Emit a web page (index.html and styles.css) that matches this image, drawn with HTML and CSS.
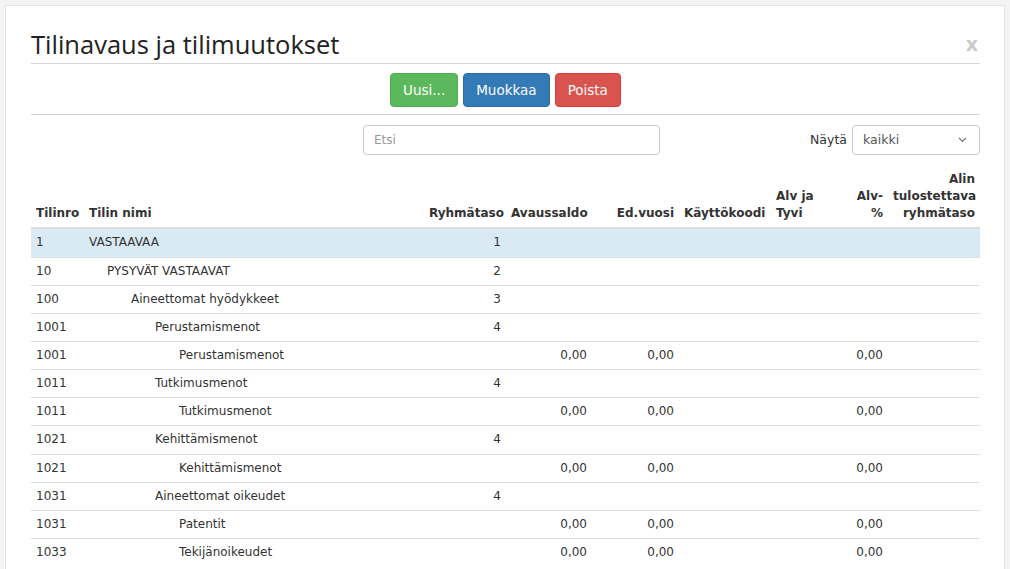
FILE: index.html
```html
<!DOCTYPE html>
<html lang="fi">
<head>
    <meta charset="UTF-8">
    <meta name="viewport" content="width=device-width, initial-scale=1.0">
    <title>Tilinavaus ja tilimuutokset</title>
    <link rel="stylesheet" href="styles.css">
</head>
<body>
    <div class="modal">
        <div class="modal-header">
            <h1>Tilinavaus ja tilimuutokset</h1>
            <span class="close">x</span>
        </div>

        <div class="toolbar">
            <button class="btn btn-success">Uusi...</button>
            <button class="btn btn-primary">Muokkaa</button>
            <button class="btn btn-danger">Poista</button>
        </div>

        <div class="filters">
            <input type="text" class="search" placeholder="Etsi">
            <label class="show-label" for="show">Näytä</label>
            <div class="select">
                <span>kaikki</span>
                <svg width="9" height="6" viewBox="0 0 9 6"><path d="M1 1l3.5 3.5L8 1" fill="none" stroke="#777" stroke-width="1.2"/></svg>
            </div>
        </div>

        <table class="accounts">
            <colgroup>
                <col class="c-nro">
                <col class="c-name">
                <col class="c-level">
                <col class="c-open">
                <col class="c-prev">
                <col class="c-code">
                <col class="c-alv">
                <col class="c-pct">
                <col class="c-min">
            </colgroup>
            <thead>
                <tr>
                    <th>Tilinro</th>
                    <th>Tilin nimi</th>
                    <th class="num">Ryhmätaso</th>
                    <th>Avaussaldo</th>
                    <th class="num">Ed.vuosi</th>
                    <th>Käyttökoodi</th>
                    <th>Alv ja Tyvi</th>
                    <th class="num">Alv-%</th>
                    <th class="num">Alin tulostettava ryhmätaso</th>
                </tr>
            </thead>
            <tbody>
                <tr class="selected">
                    <td>1</td><td class="lvl1">VASTAAVAA</td><td class="num">1</td>
                    <td></td><td></td><td></td><td></td><td></td><td></td>
                </tr>
                <tr>
                    <td>10</td><td class="lvl2">PYSYVÄT VASTAAVAT</td><td class="num">2</td>
                    <td></td><td></td><td></td><td></td><td></td><td></td>
                </tr>
                <tr>
                    <td>100</td><td class="lvl3">Aineettomat hyödykkeet</td><td class="num">3</td>
                    <td></td><td></td><td></td><td></td><td></td><td></td>
                </tr>
                <tr>
                    <td>1001</td><td class="lvl4">Perustamismenot</td><td class="num">4</td>
                    <td></td><td></td><td></td><td></td><td></td><td></td>
                </tr>
                <tr>
                    <td>1001</td><td class="lvl5">Perustamismenot</td><td></td>
                    <td class="num">0,00</td><td class="num">0,00</td><td></td><td></td><td class="num">0,00</td><td></td>
                </tr>
                <tr>
                    <td>1011</td><td class="lvl4">Tutkimusmenot</td><td class="num">4</td>
                    <td></td><td></td><td></td><td></td><td></td><td></td>
                </tr>
                <tr>
                    <td>1011</td><td class="lvl5">Tutkimusmenot</td><td></td>
                    <td class="num">0,00</td><td class="num">0,00</td><td></td><td></td><td class="num">0,00</td><td></td>
                </tr>
                <tr>
                    <td>1021</td><td class="lvl4">Kehittämismenot</td><td class="num">4</td>
                    <td></td><td></td><td></td><td></td><td></td><td></td>
                </tr>
                <tr>
                    <td>1021</td><td class="lvl5">Kehittämismenot</td><td></td>
                    <td class="num">0,00</td><td class="num">0,00</td><td></td><td></td><td class="num">0,00</td><td></td>
                </tr>
                <tr>
                    <td>1031</td><td class="lvl4">Aineettomat oikeudet</td><td class="num">4</td>
                    <td></td><td></td><td></td><td></td><td></td><td></td>
                </tr>
                <tr>
                    <td>1031</td><td class="lvl5">Patentit</td><td></td>
                    <td class="num">0,00</td><td class="num">0,00</td><td></td><td></td><td class="num">0,00</td><td></td>
                </tr>
                <tr>
                    <td>1033</td><td class="lvl5">Tekijänoikeudet</td><td></td>
                    <td class="num">0,00</td><td class="num">0,00</td><td></td><td></td><td class="num">0,00</td><td></td>
                </tr>
            </tbody>
        </table>
    </div>
</body>
</html>
```

FILE: styles.css
```css
html, body {
    height: 100%;
    overflow: hidden;
}
body {
    margin: 0;
    padding: 5px 5px 0;
    background-color: #f4f4f4;
    font-family: "DejaVu Sans", Verdana, sans-serif;
    font-size: 12px;
    line-height: 1.42857;
    color: #333;
    box-sizing: border-box;
}
.modal {
    background-color: #fff;
    border: 1px solid #e2e2e2;
    border-bottom: none;
    padding: 0 24px 0 25px;
    min-height: 100%;
}
.modal-header {
    display: flex;
    align-items: center;
    justify-content: space-between;
    padding-top: 22px;
    padding-bottom: 3px;
    border-bottom: 1px solid #d5d5d5;
}
h1 {
    margin: 0;
    font-family: "Open Sans", sans-serif;
    font-weight: 400;
    font-size: 25.5px;
    line-height: 32px;
    color: #222;
}
.close {
    font-weight: bold;
    font-size: 19px;
    color: #c9c9c9;
    margin-right: 2px;
    margin-top: 2px;
}
.toolbar {
    display: flex;
    justify-content: center;
    gap: 5px;
    padding: 9px 0 7px;
    border-bottom: 1px solid #d5d5d5;
}
.btn {
    font-family: "DejaVu Sans", Verdana, sans-serif;
    font-size: 13.5px;
    line-height: 20px;
    padding: 6px 12px;
    border: 1px solid transparent;
    border-radius: 4px;
    color: #fff;
    cursor: pointer;
}
.btn-success {
    background-color: #5cb85c;
    border-color: #4cae4c;
}
.btn-primary {
    background-color: #337ab7;
    border-color: #2e6da4;
}
.btn-danger {
    background-color: #d9534f;
    border-color: #d43f3a;
}
.filters {
    display: flex;
    align-items: center;
    margin-top: 10px;
}
.search {
    margin-left: 332px;
    width: 297px;
    height: 30px;
    box-sizing: border-box;
    padding: 4px 10px;
    border: 1px solid #ccc;
    border-radius: 4px;
    font-family: "DejaVu Sans", Verdana, sans-serif;
    font-size: 12px;
    color: #555;
}
.search::placeholder {
    color: #999;
}
.show-label {
    margin-left: auto;
    margin-right: 5px;
    font-size: 12.5px;
}
.select {
    display: flex;
    align-items: center;
    justify-content: space-between;
    width: 128px;
    height: 30px;
    box-sizing: border-box;
    padding: 0 12px 0 10px;
    border: 1px solid #ccc;
    border-radius: 4px;
    font-size: 12.5px;
    color: #555;
}
.accounts {
    width: 100%;
    margin-top: 11px;
    border-collapse: collapse;
    table-layout: fixed;
}
.c-nro { width: 53px; }
.c-name { width: 340px; }
.c-level { width: 82px; }
.c-open { width: 86px; }
.c-prev { width: 87px; }
.c-code { width: 92px; }
.c-alv { width: 70px; }
.c-pct { width: 47px; }
.c-min { width: 92px; }
th, td {
    padding: 5px;
    text-align: left;
}
th {
    vertical-align: bottom;
    border-bottom: 2px solid #ddd;
    font-weight: bold;
}
td {
    border-top: 1px solid #ddd;
    white-space: nowrap;
}
.num {
    text-align: right;
}
.selected td {
    background-color: #d9eaf5;
}
.lvl2 { padding-left: 23px; }
.lvl3 { padding-left: 47px; }
.lvl4 { padding-left: 71px; }
.lvl5 { padding-left: 95px; }
```
